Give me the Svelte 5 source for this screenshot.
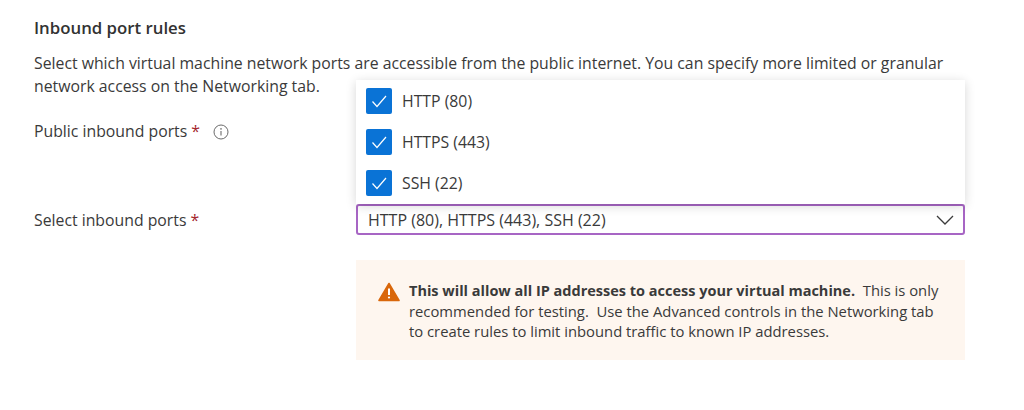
<script lang="ts">
	const ports: string[] = ['HTTP (80)', 'HTTPS (443)', 'SSH (22)'];
</script>

<section class="page">
	<h2>Inbound port rules</h2>
	<p class="lede">
		Select which virtual machine network ports are accessible from the public internet. You can specify more limited or granular
		network access on the Networking tab.
	</p>

	<div class="form">
		<div class="label public">
			Public inbound ports <span class="req">*</span>
			<svg class="info" width="16" height="16" viewBox="0 0 16 16" aria-hidden="true">
				<circle cx="8" cy="8" r="7" fill="none" stroke="#6b6b6b" stroke-width="1" />
				<circle cx="8" cy="4.9" r="0.8" fill="#6b6b6b" />
				<path d="M8 7v4.6" stroke="#6b6b6b" stroke-width="1.1" fill="none" />
			</svg>
		</div>
		<div></div>

		<div class="label select-label">Select inbound ports <span class="req">*</span></div>
		<div class="select-wrap">
			<div class="menu">
				{#each ports as port}
					<div class="option">
						<span class="check">
							<svg width="26" height="26" viewBox="0 0 26 26" aria-hidden="true">
								<path d="M6.5 13.5l4.5 5 9-10.5" fill="none" stroke="#fff" stroke-width="1.2" />
							</svg>
						</span>
						{port}
					</div>
				{/each}
			</div>
			<div class="select">
				<span>HTTP (80), HTTPS (443), SSH (22)</span>
				<svg width="18" height="10" viewBox="0 0 18 10" aria-hidden="true">
					<path d="M1 1l8 8 8-8" fill="none" stroke="#3b3b3b" stroke-width="1.3" />
				</svg>
			</div>
		</div>

		<div></div>
		<div class="warning">
			<svg class="warn-icon" width="22" height="20" viewBox="0 0 22 20" aria-hidden="true">
				<path d="M11 1.5L21 18.5H1z" fill="#d9670b" stroke="#d9670b" stroke-width="1.6" stroke-linejoin="round" />
				<path d="M11 6.5v6.5" stroke="#fff" stroke-width="2" />
				<circle cx="11" cy="15.5" r="1.1" fill="#fff" />
			</svg>
			<p>
				<strong>This will allow all IP addresses to access your virtual machine.</strong>&nbsp; This is only
				recommended for testing.&nbsp; Use the Advanced controls in the Networking tab
				to create rules to limit inbound traffic to known IP addresses.
			</p>
		</div>
	</div>
</section>

<style>
	:global(body) {
		background: #fff;
	}

	.page {
		padding: 18px 59px 0 34px;
		height: 392px;
		overflow: hidden;
		font-family: "Open Sans", "Noto Sans", sans-serif;
		font-size: 15.8px;
		color: #3a3a3a;
	}

	h2 {
		margin: 0;
		font-size: 16.8px;
		line-height: 20px;
		font-weight: 600;
		color: #323232;
	}

	.lede {
		margin: 14px 0 0;
		font-size: 15.8px;
		line-height: 23px;
		max-width: 925px;
	}

	.form {
		display: grid;
		grid-template-columns: 322px 609px;
		margin-top: 23px;
	}

	.label {
		line-height: 20px;
	}

	.public {
		display: flex;
		align-items: flex-start;
		gap: 4px;
		height: 83px;
	}

	.info {
		margin: 3px 0 0 9px;
	}

	.req {
		color: #a4262c;
	}

	.select-label {
		padding-top: 6px;
	}

	.select-wrap {
		position: relative;
	}

	.menu {
		position: absolute;
		left: 0;
		right: 0;
		bottom: 100%;
		height: 124px;
		background: #fff;
		box-shadow: 0 2px 10px rgba(0, 0, 0, 0.16);
	}

	.option {
		display: flex;
		align-items: center;
		gap: 10px;
		height: 41.3px;
		padding-left: 10px;
	}

	.check {
		display: block;
		width: 26px;
		height: 26px;
		border-radius: 2px;
		background: #0a73d6;
	}

	.check svg {
		display: block;
	}

	.select {
		display: flex;
		align-items: center;
		justify-content: space-between;
		height: 31px;
		box-sizing: border-box;
		padding: 0 9px 0 10px;
		border: 2px solid #a765c4;
		border-radius: 3px;
		background: #fff;
		font-size: 16px;
	}

	.warning {
		display: flex;
		gap: 9px;
		height: 100px;
		box-sizing: border-box;
		margin-top: 25px;
		padding: 20px 20px 0 22px;
		background: #fef6ef;
		font-size: 14.8px;
		line-height: 20px;
	}

	.warn-icon {
		flex-shrink: 0;
		margin-top: 2px;
	}

	.warning p {
		margin: 0;
	}

	strong {
		font-size: 14.5px;
		font-weight: 700;
	}
</style>
